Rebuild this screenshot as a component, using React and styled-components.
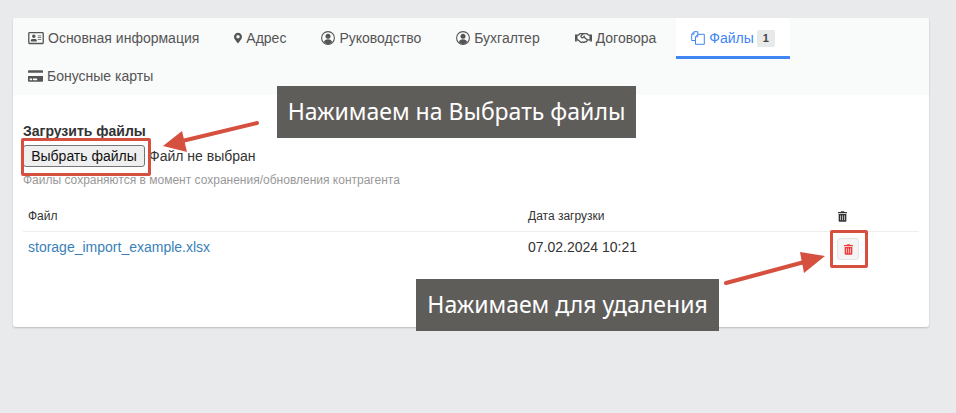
import React from "react";
import styled, { createGlobalStyle } from "styled-components";
import {
  FaRegAddressCard,
  FaMapMarkerAlt,
  FaRegHandshake,
  FaCreditCard,
  FaTrashAlt
} from "react-icons/fa";

const GlobalStyle = createGlobalStyle`
  html, body {
    margin: 0;
    padding: 0;
    background: #e9eaec;
    font-family: "Liberation Sans", Arial, sans-serif;
  }
`;

const Page = styled.div`
  position: relative;
  width: 956px;
  height: 413px;
  padding: 18px 27px 0 13px;
  box-sizing: border-box;
  overflow: hidden;
`;

const Card = styled.div`
  height: 309px;
  background: #fff;
  border-radius: 3px;
  box-shadow: 0 1px 2px rgba(0, 0, 0, 0.2);
  overflow: hidden;
`;

const TabBar = styled.div`
  display: flex;
  flex-wrap: wrap;
  column-gap: 5px;
  height: 77px;
  background: #f9fafa;
  align-content: flex-start;
`;

const Tab = styled.div`
  display: flex;
  align-items: center;
  gap: 4px;
  height: ${(p) => (p.$row2 ? "34px" : "36px")};
  padding: ${(p) => (p.$row2 ? "0 15px" : "2px 15px 0")};
  font-size: 14px;
  color: ${(p) => (p.$active ? "#4285f4" : "#555")};
  background: ${(p) => (p.$active ? "#fff" : "transparent")};
  border-bottom: ${(p) => (p.$active ? "3px solid #4285f4" : "3px solid transparent")};
  ${(p) => p.$row2 && "border-bottom: 0;"}
  svg {
    height: ${(p) => p.$iconHeight || 14}px;
    width: ${(p) => p.$iconWidth || 14}px;
    flex-shrink: 0;
  }
`;

const Badge = styled.span`
  display: inline-block;
  width: 18px;
  height: 17px;
  line-height: 17px;
  margin-left: -1px;
  text-align: center;
  font-size: 11px;
  font-weight: 700;
  color: #444;
  background: #e8eaea;
  border-radius: 2px;
`;

const Content = styled.div`
  padding: 28px 10px 0;
`;

const UploadLabel = styled.div`
  font-size: 14px;
  line-height: 16px;
  font-weight: 700;
  color: #333;
`;

const FileRow = styled.div`
  display: flex;
  align-items: center;
  gap: 4px;
  margin-top: 6px;
`;

const FileButton = styled.button`
  width: 122px;
  height: 22px;
  padding: 0;
  font-family: "Liberation Sans", Arial, sans-serif;
  font-size: 14px;
  color: #111;
  background: #efefef;
  border: 1px solid #767676;
  border-radius: 3px;
`;

const FileName = styled.span`
  font-size: 14px;
  color: #333;
`;

const Hint = styled.div`
  margin-top: 6px;
  font-size: 12px;
  line-height: 14px;
  color: #999;
`;

const TableHead = styled.div`
  display: grid;
  grid-template-columns: 500px 310px 1fr;
  align-items: center;
  margin-top: 15px;
  height: 30px;
  padding: 0 5px 1px;
  box-sizing: border-box;
  font-size: 12px;
  color: #333;
  border-bottom: 1px solid #eee;
`;

const TableRow = styled.div`
  display: grid;
  grid-template-columns: 500px 310px 1fr;
  padding: 7px 5px 0;
  font-size: 14px;
  line-height: 16px;
  color: #333;
`;

const FileLink = styled.a`
  color: #3a7fb9;
  text-decoration: none;
`;

const HeadIcon = styled.span`
  display: flex;
  color: #333;
  svg {
    width: 9px;
    height: 11px;
  }
`;

const DeleteButton = styled.button`
  display: flex;
  align-items: center;
  justify-content: center;
  width: 22px;
  height: 22px;
  margin: -1px 0 0 -1px;
  padding: 0;
  color: #f03e3e;
  background: #f4f4f4;
  border: 1px solid #e4e4e4;
  border-radius: 3px;
  svg {
    width: 9px;
    height: 11px;
  }
`;

const Callout = styled.div`
  position: absolute;
  left: ${(p) => p.$left}px;
  top: ${(p) => p.$top}px;
  width: ${(p) => p.$width}px;
  height: 52px;
  line-height: 51px;
  text-align: center;
  font-family: "Noto Sans", sans-serif;
  font-size: 23px;
  color: #fff;
  background: rgba(88, 86, 83, 0.96);
  white-space: nowrap;
`;

const Highlight = styled.div`
  position: absolute;
  left: ${(p) => p.$left}px;
  top: ${(p) => p.$top}px;
  width: ${(p) => p.$width}px;
  height: ${(p) => p.$height}px;
  box-sizing: border-box;
  border: 3px solid #d5503f;
  border-radius: 2px;
`;

const ArrowLayer = styled.svg`
  position: absolute;
  left: 0;
  top: 0;
`;

// ring with a solid person inside
const UserRing = () => (
  <svg viewBox="0 0 14 14" fill="none">
    <circle cx="7" cy="7" r="6.4" stroke="currentColor" strokeWidth="1.1" />
    <circle cx="7" cy="5.2" r="2.5" fill="currentColor" />
    <path d="M2.9 11.2c.5-2 2-2.9 4.1-2.9s3.6.9 4.1 2.9C10 12.4 8.6 13 7 13s-3-.6-4.1-1.8z" fill="currentColor" />
  </svg>
);

const FilesIcon = () => (
  <svg viewBox="0 0 14 14" fill="none" stroke="currentColor" strokeWidth="1" strokeLinejoin="round">
    <path d="M4.5 9.5H.7V3.2L3 .7h3.8v2.6" />
    <path d="M.7 3.2H3V.7" />
    <path d="M4.5 5.8l2.3-2.5h6.5v10H4.5z" />
    <path d="M4.5 5.8h2.3V3.3" />
  </svg>
);

const tabs = [
  { label: "Основная информация", icon: <FaRegAddressCard />, iconWidth: 16 },
  { label: "Адрес", icon: <FaMapMarkerAlt />, iconWidth: 8, iconHeight: 12 },
  { label: "Руководство", icon: <UserRing /> },
  { label: "Бухгалтер", icon: <UserRing /> },
  { label: "Договора", icon: <FaRegHandshake />, iconWidth: 17 }
];

const App = () => {
  return (
    <Page>
      <GlobalStyle />
      <Card>
        <TabBar>
          {tabs.map((tab) => (
            <Tab key={tab.label} $iconWidth={tab.iconWidth} $iconHeight={tab.iconHeight}>
              {tab.icon}
              {tab.label}
            </Tab>
          ))}
          <Tab $active>
            <FilesIcon />
            Файлы
            <Badge>1</Badge>
          </Tab>
          <Tab $row2 $iconWidth={15}>
            <FaCreditCard />
            Бонусные карты
          </Tab>
        </TabBar>
        <Content>
          <UploadLabel>Загрузить файлы</UploadLabel>
          <FileRow>
            <FileButton>Выбрать файлы</FileButton>
            <FileName>Файл не выбран</FileName>
          </FileRow>
          <Hint>Файлы сохраняются в момент сохранения/обновления контрагента</Hint>
          <TableHead>
            <span>Файл</span>
            <span>Дата загрузки</span>
            <HeadIcon>
              <FaTrashAlt />
            </HeadIcon>
          </TableHead>
          <TableRow>
            <FileLink>storage_import_example.xlsx</FileLink>
            <span>07.02.2024 10:21</span>
            <DeleteButton>
              <FaTrashAlt />
            </DeleteButton>
          </TableRow>
        </Content>
      </Card>

      <Highlight $left={21} $top={138} $width={130} $height={38} />
      <Highlight $left={830} $top={230} $width={38} $height={38} />
      <ArrowLayer width="956" height="413" viewBox="0 0 956 413">
        <line x1="257" y1="123" x2="178" y2="142" stroke="#d5503f" strokeWidth="4" strokeLinecap="round" />
        <polygon points="163,146 182,131 187,152" fill="#d5503f" />
        <line x1="726" y1="283" x2="808" y2="261" stroke="#d5503f" strokeWidth="4" strokeLinecap="round" />
        <polygon points="825,256 800,252 804,273" fill="#d5503f" />
      </ArrowLayer>
      <Callout $left={277} $top={86} $width={359}>Нажимаем на Выбрать файлы</Callout>
      <Callout $left={416} $top={279} $width={303}>Нажимаем для удаления</Callout>
    </Page>
  );
};

export default App;
